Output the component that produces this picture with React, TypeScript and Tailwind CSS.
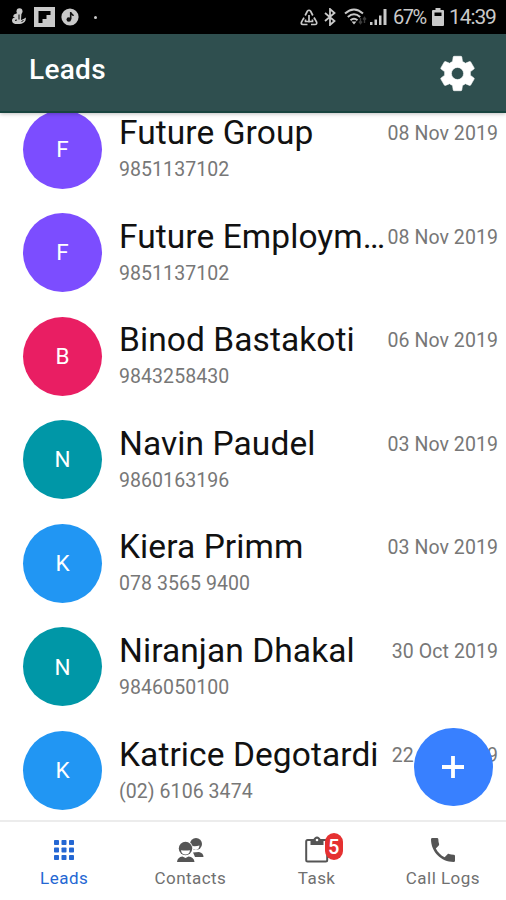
import React from "react";

type Lead = { name: string; phone: string; date: string; color: string };

const leads: Lead[] = [
  { name: "Future Group", phone: "9851137102", date: "08 Nov 2019", color: "bg-[#7c4dff]" },
  { name: "Future Employm…", phone: "9851137102", date: "08 Nov 2019", color: "bg-[#7c4dff]" },
  { name: "Binod Bastakoti", phone: "9843258430", date: "06 Nov 2019", color: "bg-[#e91e63]" },
  { name: "Navin Paudel", phone: "9860163196", date: "03 Nov 2019", color: "bg-[#0097a7]" },
  { name: "Kiera Primm", phone: "078 3565 9400", date: "03 Nov 2019", color: "bg-[#2196f3]" },
  { name: "Niranjan Dhakal", phone: "9846050100", date: "30 Oct 2019", color: "bg-[#0097a7]" },
  { name: "Katrice Degotardi", phone: "(02) 6106 3474", date: "22 Oct 2019", color: "bg-[#2196f3]" },
];

function StatusBar() {
  return (
    <div className="flex h-[34px] shrink-0 items-center bg-black text-[#c9c9c9]">
      <svg className="ml-[11px] h-[18px] w-[16px]" viewBox="0 0 16 18">
        <g fill="currentColor">
          <circle cx="8.500" cy="3.300" r="3" />
          <path d="M6.500 5h4l-.5 7 2.500-1 2.500-1.500-.5 3c-1 2-3.500 3.500-6 3.500C4 16.500 1 15.500 1 12.500 1 10.500 2.500 9.800 4 9.500L2 8.500 3 6.500z" />
        </g>
        <path d="M4 12.500q1.500-1 2 0M8 6.500v5M10.500 13.500l2-1" stroke="black" strokeWidth="1" fill="none" />
      </svg>
      <svg className="ml-[7px] h-[20px] w-[21px]" viewBox="0 0 21 20">
        <path fill="currentColor" fillRule="evenodd" d="M0 0h21v20H0zM4.500 4v12h4v-4h4V8h4V4z" />
      </svg>
      <svg className="ml-[6px] h-[18px] w-[18px]" viewBox="0 0 18 18">
        <circle cx="9" cy="9" r="8.600" fill="currentColor" />
        <path d="M9.700 4v7.200M9.700 4.500c.4 2 2.300 1.800 2.600 3.400" stroke="#111" strokeWidth="1.600" fill="none" />
        <circle cx="7.800" cy="11.500" r="2.300" fill="#111" />
      </svg>
      <span className="ml-[15px] h-[3px] w-[3px] rounded-full bg-current" />
      <svg className="ml-auto h-[17px] w-[18px]" viewBox="0 0 18 17" fill="none" stroke="currentColor" strokeWidth="1.700">
        <path d="M5.200 6.500 7.300 2.300Q9 .200 10.700 2.300l2.100 4.200M14 8.500l2.600 4.500q.6 2.500-1.600 2.500h-4M7.500 15.500H3q-2.500-.2-1.400-2.600L4 8.700M9 6v7.500M5.500 10.500v2h7v-2" />
      </svg>
      <svg className="ml-[6px] h-[18px] w-[12px]" viewBox="0 0 12 18" fill="none" stroke="currentColor" strokeWidth="1.800">
        <path d="m1 5 9.500 8L6 17V1l4.500 4L1 13" />
      </svg>
      <svg className="ml-[8px] h-[18px] w-[23px]" viewBox="0 0 23 18" fill="none" stroke="currentColor" strokeWidth="2">
        <path d="M1 5.500Q10 -2.500 19 5.500M3.800 9Q10 3.500 16.200 9M6.500 12.200q3.500-3 7 0" />
        <path d="m7.500 13.500 2.500 3 2.500-3z" fill="currentColor" stroke="none" />
        <path d="M16.500 10v5m-1.500-1.500 1.500 2 1.500-2M20.500 15v-5M19 11.500l1.500-2 1.500 2" stroke="#3c3c3c" strokeWidth="1.400" />
      </svg>
      <svg className="ml-[2px] h-[18px] w-[19px]" viewBox="0 0 19 18" fill="currentColor">
        <path d="M1 14h2.500v3H1zM5.500 11.500H8V17H5.500zM10 7.500h2.500V17H10zM14.500 1H17.500v16h-3z" />
      </svg>
      <span className="ml-[5px] w-[34px] whitespace-nowrap text-[20px] leading-[36px] tracking-[-1.5px]">67%</span>
      <svg className="ml-[5px] h-[18px] w-[12px]" viewBox="0 0 12 18">
        <path fill="currentColor" fillRule="evenodd" d="M3.500 0h5v2H11q1 0 1 1v14q0 1-1 1H1q-1 0-1-1V3q0-1 1-1h2.500zM2.500 4.500V8h7V4.500z" />
      </svg>
      <span className="ml-[5px] mr-[11px] w-[46px] whitespace-nowrap text-[21px] leading-[36px] tracking-[-1.1px]">14:39</span>
    </div>
  );
}

function Header() {
  return (
    <header className="z-10 flex h-[79px] shrink-0 items-start justify-between border-b-2 border-[#18443f] bg-[#2f4f4f] pl-[29px] pr-[27px] shadow-[0_1px_4px_rgba(0,0,0,0.25)]">
      <h1 className="mt-[16px] text-[28px] font-medium leading-[40px] tracking-[0.3px] text-white">Leads</h1>
      <svg className="mt-[18px] h-[43px] w-[43px]" viewBox="0 0 24 24" fill="white" stroke="white" strokeWidth=".35">
        <path d="M19.140 12.940c.04-.3.06-.61.06-.94 0-.32-.02-.64-.07-.94l2.030-1.580a.49.49 0 0 0 .12-.61l-1.920-3.320a.488.488 0 0 0-.59-.22l-2.390.96c-.5-.38-1.030-.7-1.620-.94l-.36-2.540a.484.484 0 0 0-.48-.41h-3.840c-.24 0-.43.17-.47.41l-.36 2.540c-.59.24-1.130.57-1.620.94l-2.390-.96a.476.476 0 0 0-.59.22L2.740 8.870c-.12.21-.08.47.12.61l2.030 1.580c-.05.3-.09.63-.09.94s.02.64.07.94l-2.030 1.580a.49.49 0 0 0-.12.61l1.920 3.320c.12.22.37.29.59.22l2.390-.96c.5.38 1.030.7 1.620.94l.36 2.540c.05.24.24.41.48.41h3.840c.24 0 .44-.17.47-.41l.36-2.540c.59-.24 1.130-.56 1.620-.94l2.390.96c.22.08.47 0 .59-.22l1.920-3.320a.49.49 0 0 0-.12-.61zM12 15.400A3.400 3.400 0 1 1 12 8.600a3.400 3.400 0 0 1 0 6.800" />
      </svg>
    </header>
  );
}

function LeadRow({ lead }: { lead: Lead }) {
  return (
    <li className="flex h-[103.6px] shrink-0 items-start pl-[23px] pr-[8px]">
      <div className={`mt-[11.5px] flex h-[79px] w-[79px] shrink-0 items-center justify-center rounded-full pt-[1px] text-[22.5px] text-white ${lead.color}`}>
        {lead.name[0]}
      </div>
      <div className="ml-[17px] mt-[15px] min-w-0 flex-1">
        <div className="whitespace-nowrap text-[33.5px] leading-[40px] tracking-[0.08px] text-[#111]">{lead.name}</div>
        <div className="mt-[4px] text-[19.5px] leading-[26px] tracking-[0.07px] text-[#777]">{lead.phone}</div>
      </div>
      <div className="mt-[23px] shrink-0 whitespace-nowrap text-[19.5px] leading-[26px] tracking-[0.07px] text-[#777]">
        {lead.date}
      </div>
    </li>
  );
}

const tabLabel = "text-[17px] leading-[22px] tracking-[0.45px] whitespace-nowrap";

function TabBar() {
  return (
    <nav className="grid h-[80px] shrink-0 grid-cols-4 border-t-2 border-[#ececec] bg-white pl-[1px] text-[#555]">
      <div className="flex flex-col items-center text-[#2467d3]">
        <svg className="mt-[18px] h-[20px] w-[20px]" viewBox="0 0 20 20" fill="currentColor">
          {[0, 7.5, 15].map((y) => [0, 7.5, 15].map((x) => <rect key={`${x}-${y}`} x={x} y={y} width="5" height="5" rx=".8" />))}
        </svg>
        <span className={`mt-[7px] ${tabLabel}`}>Leads</span>
      </div>
      <div className="flex flex-col items-center">
        <svg className="mt-[16px] h-[24px] w-[27px]" viewBox="0 0 27 24" fill="currentColor">
          <circle cx="19" cy="6" r="6" />
          <path d="M15.500 8q3.500.5 7-.5-.5 4-3.500 4.500l-3-1z" fill="white" />
          <path d="M16 14.500l6-.5q4.500 1 4.500 5H18z" />
          <circle cx="8.500" cy="10.500" r="7.500" fill="white" />
          <path d="M0 24q.5-5 5.500-5.500l3 1.500 3-1.500q5.500.5 6 5.500z" />
          <circle cx="8.500" cy="10.500" r="6.700" />
          <path d="M4 12.200q4.500.8 9 0-.5 4.300-4.500 4.300T4 12.200z" fill="white" />
        </svg>
        <span className={`mt-[5px] ${tabLabel} text-[#707070]`}>Contacts</span>
      </div>
      <div className="flex flex-col items-center">
        <div className="relative mt-[14px] h-[27px] w-[24px]">
          <svg className="h-[27px] w-[24px]" viewBox="0 0 24 27">
            <rect x="1.200" y="4" width="21" height="21.500" rx="1.500" fill="none" stroke="currentColor" strokeWidth="2" />
            <path d="M5.500 4H8q1.500-3.500 4-3.500T16 4h2.500v5h-13z" fill="currentColor" />
            <circle cx="12" cy="4" r="1.300" fill="white" />
          </svg>
          <span className="absolute left-[20px] top-[-3px] flex h-[27px] w-[18px] items-center justify-center rounded-[9px] bg-[#e53131] text-[20px] font-medium text-white">5</span>
        </div>
        <span className={`mt-[4px] ${tabLabel} text-[#707070]`}>Task</span>
      </div>
      <div className="flex flex-col items-center">
        <svg className="mt-[16px] h-[24px] w-[24px]" viewBox="3 3 18 18" fill="currentColor">
          <path d="M3 4q0-1 1-1h3.500q1 0 1 1c0 1.250.2 2.450.57 3.570.1.350.01.74-.25 1.020l-2.200 2.200c1.440 2.830 3.760 5.150 6.590 6.590l2.200-2.200c.28-.28.67-.36 1.020-.25 1.120.37 2.320.57 3.570.57q1 0 1 1V20q0 1-1 1C10.610 21 3 13.390 3 4z" />
        </svg>
        <span className={`mt-[5px] ${tabLabel} text-[#707070]`}>Call Logs</span>
      </div>
    </nav>
  );
}

export default function App() {
  return (
    <div className="relative flex h-[900px] w-[506px] flex-col overflow-hidden bg-white font-[Roboto,sans-serif]">
      <StatusBar />
      <Header />
      <main className="min-h-0 flex-1 overflow-hidden">
        <ul className="-mt-[15px] flex flex-col">
          {leads.map((lead, i) => (
            <LeadRow key={i} lead={lead} />
          ))}
        </ul>
      </main>
      <TabBar />
      <button aria-label="Add lead" className="absolute left-[414px] top-[728px] flex h-[78px] w-[79px] items-center justify-center rounded-full bg-[#3880ff]">
        <svg className="mr-[1px] h-[22px] w-[22px]" viewBox="0 0 22 22" fill="none" stroke="white" strokeWidth="3.800">
          <path d="M11 0v22M0 11h22" />
        </svg>
      </button>
    </div>
  );
}
